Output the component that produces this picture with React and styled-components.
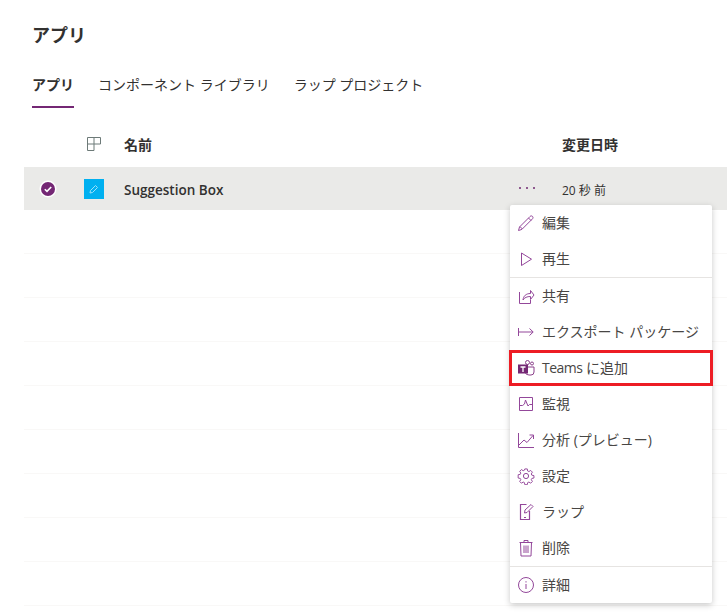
import React from "react";
import styled, { createGlobalStyle } from "styled-components";

const Global = createGlobalStyle`
  html, body { margin: 0; padding: 0; background: #fff; overflow: hidden; }
  body { font-family: "Open Sans", "Noto Sans CJK JP", "Liberation Sans", sans-serif; color: #323130; }
`;
const Page = styled.div`
  width: 727px; height: 615px; position: relative; overflow: hidden; box-sizing: border-box; padding-top: 22px;
`;
const Title = styled.h1`
  margin: 0 0 0 32px; font-size: 18px; line-height: 26px; font-weight: 600; color: #323130;
`;
const Tabs = styled.nav`
  display: flex; gap: 24px; margin: 24px 0 0 32px; height: 36px;
`;
const Tab = styled.div`
  font-size: 14px; line-height: 26px; height: 36px; box-sizing: border-box;
  color: #323130; font-weight: ${p => (p.$active ? 700 : 400)};
  border-bottom: 2px solid ${p => (p.$active ? "#742774" : "transparent")};
`;
const Columns = styled.div`
  display: grid; grid-template-columns: 60px 40px 438px 165px; margin-left: 24px; align-items: center;
`;
const HeaderRow = styled(Columns)`
  height: 45px; margin-top: 14px; font-size: 14px; font-weight: 600; color: #323130;
`;
const HeaderLabel = styled.span`
  padding-bottom: 2px;
`;
const SelectedRow = styled(Columns)`
  height: 43px; background: #eaeae8; font-size: 13.5px; font-weight: 600; color: #323130;
`;
const Blank = styled.div`
  height: 43px; margin-left: 24px; border-bottom: 1px solid #f9f8f7;
`;
const Cell = styled.div`
  display: flex; align-items: center;
`;
const CheckCell = styled(Cell)`
  justify-content: center; padding-right: 12px;
`;
const AppTile = styled.div`
  width: 20px; height: 20px; background: #00b0f0; display: flex; align-items: center; justify-content: center;
`;
const DateCell = styled(Cell)`
  font-weight: 400; font-size: 12px; padding-top: 2px;
`;
const NameCell = styled(Cell)`
  justify-content: space-between; padding-right: 27px;
`;
const NameText = styled.span`
  padding-top: 2px;
`;
const More = styled.span`
  display: flex; gap: 5px; margin-top: -2px;
`;
const Dot = styled.i`
  width: 2px; height: 2px; background: #8f5a8f; display: block;
`;
const Menu = styled.ul`
  position: absolute; left: 510px; top: 205px; width: 202px; margin: 0; padding: 0; list-style: none;
  background: #fff; box-shadow: 0 2px 6px rgba(0,0,0,.22); border-radius: 2px;
`;
const Item = styled.li`
  position: relative; height: 36px; display: flex; align-items: center; gap: 7px; padding-left: 7px;
  font-size: 14px; color: #484644; white-space: nowrap;
  ${p => p.$divider && "border-top: 1px solid #e6e4e2;"}
  ${p => p.$highlight && `
    &::after { content: ""; position: absolute; inset: 0 -1px; border: 3px solid #ed1c24; }
  `}
`;
const Label = styled.span`
  padding-bottom: 2px;
`;
const Latin = styled.span`
  letter-spacing: -0.5px;
`;
const IconBox = styled.svg`
  width: 18px; height: 18px; flex: none; fill: none; stroke: #93479a; stroke-width: 1;
`;

const icons = {
  edit: <><path d="M2.500 13 13 2.500c.8-.8 2-.8 2.600 0 .6.7.5 1.700-.2 2.400L4.900 15.400 1.500 16.500Z"/><path d="m11.500 4 2.600 2.600M3 12.600l2.400 2.400"/></>,
  play: <path d="M4.500 3v12.500L14.500 9.200Z"/>,
  share: <><path d="M2.500 5v11.500h11V13"/><path d="M6 13c.4-4 3-6.500 7.500-6.500V3.500L17 8l-3.500 4.500V9.500C10 9.500 7.500 10.500 6 13Z"/></>,
  export: <><path d="M1.500 5v8M2 9h14"/><path d="m12.500 5.500 3.700 3.500-3.700 3.500"/></>,
  monitor: <><path d="M2.500 2.500h13v13h-13Z"/><path d="M2.500 10.500h3l2-1.500 1-4 2.500 6 1.500-1.500h3"/></>,
  chart: <><path d="M1.500 2v14.500H17"/><path d="m2 14 5-5 3 2.500 6-7M12.500 4H16.500V8"/></>,
  gear: <><circle cx="9" cy="9" r="2.600"/><path d="M7.700 1.500h2.600l.4 2.200 1.300.6 1.900-1.200 1.800 1.800-1.200 1.900.6 1.300 2.200.4v2.600l-2.200.4-.6 1.300 1.200 1.900-1.800 1.800-1.900-1.200-1.300.6-.4 2.200H7.700l-.4-2.200-1.300-.6-1.900 1.200-1.800-1.800 1.200-1.900-.6-1.300-2.200-.4V7.600l2.200-.4.6-1.300-1.200-1.900 1.800-1.800 1.900 1.200 1.300-.6Z" transform="translate(.5 .5) scale(.95)"/></>,
  wrap: <><path d="M9.500 1.500H3.500v15h9V8" strokeWidth="1.200"/><path d="M7 14.500h2"/><path d="m7.500 10 .5-3 6-5.500 2 2-6 6Z"/></>,
  trash: <><path d="M2.500 3.500h13M7 3.500V1.500h4v2M3.500 3.500l.5 13.500h10l.5-13.500"/><path d="M7 6.500V14M9 6.500V14M11 6.500V14"/></>,
  info: <><circle cx="9" cy="9" r="7.500"/><path d="M9 8v5M9 5.200v1.300"/></>,
};
const TeamsIcon = () => (
  <svg width="18" height="18" viewBox="0 0 18 18" style={{ flex: "none" }}>
    <circle cx="10.500" cy="3.500" r="2" fill="none" stroke="#8a3f8a"/>
    <circle cx="15" cy="4.500" r="1.500" fill="none" stroke="#8a3f8a"/>
    <path d="M8 8h9v5a3 3 0 0 1-3 3h-2a4 4 0 0 1-4-3Z" fill="none" stroke="#8a3f8a"/>
    <rect x="1" y="5.500" width="10" height="9" fill="#742774"/>
    <path d="M3.500 8h5M6 8v5" stroke="#fff" strokeWidth="1.300" fill="none"/>
  </svg>
);
const Icon = ({ name }) => <IconBox viewBox="0 0 18 18">{icons[name]}</IconBox>;

const menu = [
  { label: "編集", icon: "edit" },
  { label: "再生", icon: "play" },
  { label: "共有", icon: "share", divider: true },
  { label: "エクスポート パッケージ", icon: "export" },
  { label: <><Latin>Teams</Latin> に追加</>, key: "teams", teams: true, highlight: true },
  { label: "監視", icon: "monitor" },
  { label: "分析 (プレビュー)", icon: "chart" },
  { label: "設定", icon: "gear" },
  { label: "ラップ", icon: "wrap" },
  { label: "削除", icon: "trash" },
  { label: "詳細", icon: "info", divider: true },
];

export default function App() {
  return (
    <Page>
      <Global />
      <Title>アプリ</Title>
      <Tabs>
        <Tab $active>アプリ</Tab>
        <Tab>コンポーネント ライブラリ</Tab>
        <Tab>ラップ プロジェクト</Tab>
      </Tabs>
      <HeaderRow>
        <span />
        <Cell>
          <svg width="14" height="14" viewBox="0 0 14 14" fill="none" stroke="#6d7a78" style={{ marginLeft: 3, marginBottom: 2 }}>
            <path d="M.5 13.500V.5h13v6.500H.5M7 .5v13H.5"/>
          </svg>
        </Cell>
        <Cell><HeaderLabel>名前</HeaderLabel></Cell>
        <Cell><HeaderLabel>変更日時</HeaderLabel></Cell>
      </HeaderRow>
      <SelectedRow>
        <CheckCell>
          <svg width="18" height="18" viewBox="0 0 18 18">
            <circle cx="9" cy="9" r="8.500" fill="#fff"/>
            <circle cx="9" cy="9" r="7" fill="#742774"/>
            <path d="m5.800 9.200 2.200 2.200 4.200-4.400" fill="none" stroke="#fff" strokeWidth="1.600"/>
          </svg>
        </CheckCell>
        <Cell>
          <AppTile>
            <svg width="12" height="12" viewBox="0 0 12 12" fill="none" stroke="#9be0fa">
              <path d="m2.500 7.500 5-5 2 2-5 5-2.500.5Z"/>
            </svg>
          </AppTile>
        </Cell>
        <NameCell>
          <NameText>Suggestion Box</NameText>
          <More><Dot /><Dot /><Dot /></More>
        </NameCell>
        <DateCell>20 秒 前</DateCell>
      </SelectedRow>
      {Array.from({ length: 9 }, (_, i) => <Blank key={i} />)}
      <Menu>
        {menu.map(m => (
          <Item key={m.key || m.label} $divider={m.divider} $highlight={m.highlight}>
            {m.teams ? <TeamsIcon /> : <Icon name={m.icon} />}
            <Label>{m.label}</Label>
          </Item>
        ))}
      </Menu>
    </Page>
  );
}
